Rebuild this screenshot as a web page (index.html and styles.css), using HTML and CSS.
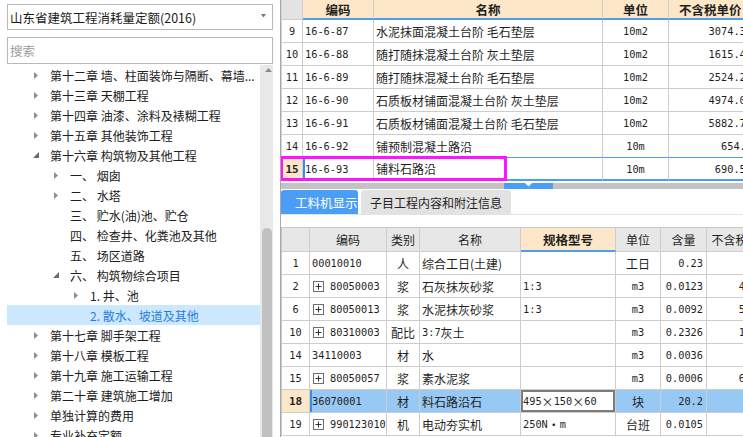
FILE: index.html
```html
<!DOCTYPE html>
<html lang="zh-CN">
<head>
<meta charset="utf-8">
<title>定额</title>
<link rel="stylesheet" href="styles.css">
</head>
<body>
<div class="app">
  <aside class="lp">
    <div class="sel"><span>山东省建筑工程消耗量定额(2016)</span><svg class="dd" width="5" height="4" viewBox="0 0 5 4"><path d="M0 0H5L2.5 3.5Z" fill="#7a7a7a"/></svg></div>
    <div class="search">搜索</div>
    <div class="treewrap">
      <ul class="tree">
        <li class="n l0"><span class="ar"><svg width="4" height="7" viewBox="0 0 4 7"><path d="M0 0L4 3.5L0 7Z" fill="#8e8e8e"/></svg></span><span class="t">第十二章 墙、柱面装饰与隔断、幕墙...</span></li>
        <li class="n l0"><span class="ar"><svg width="4" height="7" viewBox="0 0 4 7"><path d="M0 0L4 3.5L0 7Z" fill="#8e8e8e"/></svg></span><span class="t">第十三章 天棚工程</span></li>
        <li class="n l0"><span class="ar"><svg width="4" height="7" viewBox="0 0 4 7"><path d="M0 0L4 3.5L0 7Z" fill="#8e8e8e"/></svg></span><span class="t">第十四章 油漆、涂料及裱糊工程</span></li>
        <li class="n l0"><span class="ar"><svg width="4" height="7" viewBox="0 0 4 7"><path d="M0 0L4 3.5L0 7Z" fill="#8e8e8e"/></svg></span><span class="t">第十五章 其他装饰工程</span></li>
        <li class="n l0"><span class="ar ex"><svg width="6" height="6" viewBox="0 0 6 6"><path d="M6 0V6H0Z" fill="#6b6b6b"/></svg></span><span class="t">第十六章 构筑物及其他工程</span></li>
        <li class="n l1"><span class="ar"><svg width="4" height="7" viewBox="0 0 4 7"><path d="M0 0L4 3.5L0 7Z" fill="#8e8e8e"/></svg></span><span class="t">一、 烟囱</span></li>
        <li class="n l1"><span class="ar"><svg width="4" height="7" viewBox="0 0 4 7"><path d="M0 0L4 3.5L0 7Z" fill="#8e8e8e"/></svg></span><span class="t">二、 水塔</span></li>
        <li class="n l1"><span class="ar"></span><span class="t">三、 贮水(油)池、贮仓</span></li>
        <li class="n l1"><span class="ar"></span><span class="t">四、 检查井、化粪池及其他</span></li>
        <li class="n l1"><span class="ar"></span><span class="t">五、 场区道路</span></li>
        <li class="n l1"><span class="ar ex"><svg width="6" height="6" viewBox="0 0 6 6"><path d="M6 0V6H0Z" fill="#6b6b6b"/></svg></span><span class="t">六、 构筑物综合项目</span></li>
        <li class="n l2"><span class="ar"><svg width="4" height="7" viewBox="0 0 4 7"><path d="M0 0L4 3.5L0 7Z" fill="#8e8e8e"/></svg></span><span class="t">1. 井、池</span></li>
        <li class="n l2 on"><span class="ar"></span><span class="t">2. 散水、坡道及其他</span></li>
        <li class="n l0"><span class="ar"><svg width="4" height="7" viewBox="0 0 4 7"><path d="M0 0L4 3.5L0 7Z" fill="#8e8e8e"/></svg></span><span class="t">第十七章 脚手架工程</span></li>
        <li class="n l0"><span class="ar"><svg width="4" height="7" viewBox="0 0 4 7"><path d="M0 0L4 3.5L0 7Z" fill="#8e8e8e"/></svg></span><span class="t">第十八章 模板工程</span></li>
        <li class="n l0"><span class="ar"><svg width="4" height="7" viewBox="0 0 4 7"><path d="M0 0L4 3.5L0 7Z" fill="#8e8e8e"/></svg></span><span class="t">第十九章 施工运输工程</span></li>
        <li class="n l0"><span class="ar"><svg width="4" height="7" viewBox="0 0 4 7"><path d="M0 0L4 3.5L0 7Z" fill="#8e8e8e"/></svg></span><span class="t">第二十章 建筑施工增加</span></li>
        <li class="n l0"><span class="ar"><svg width="4" height="7" viewBox="0 0 4 7"><path d="M0 0L4 3.5L0 7Z" fill="#8e8e8e"/></svg></span><span class="t">单独计算的费用</span></li>
        <li class="n l0"><span class="ar"><svg width="4" height="7" viewBox="0 0 4 7"><path d="M0 0L4 3.5L0 7Z" fill="#8e8e8e"/></svg></span><span class="t">专业补充定额</span></li>
      </ul>
      <div class="vs">
        <svg class="up" width="7" height="4" viewBox="0 0 7 4"><path d="M0 4L3.5 0L7 4Z" fill="#8a8a8a"/></svg>
        <div class="thumb"></div>
      </div>
    </div>
  </aside>

  <main class="rp">
    <div class="g1">
      <div class="row hd">
        <div class="c a1 rnh"></div><div class="c a2">编码</div><div class="c a3">名称</div><div class="c a4">单位</div><div class="c a5">不含税单价</div>
      </div>
      <div class="row">
        <div class="c a1 m">9</div><div class="c a2 m">16-6-87</div><div class="c a3">水泥抹面混凝土台阶 毛石垫层</div><div class="c a4 m">10m2</div><div class="c a5 m">3074.37</div>
      </div>
      <div class="row">
        <div class="c a1 m">10</div><div class="c a2 m">16-6-88</div><div class="c a3">随打随抹混凝土台阶 灰土垫层</div><div class="c a4 m">10m2</div><div class="c a5 m">1615.43</div>
      </div>
      <div class="row">
        <div class="c a1 m">11</div><div class="c a2 m">16-6-89</div><div class="c a3">随打随抹混凝土台阶 毛石垫层</div><div class="c a4 m">10m2</div><div class="c a5 m">2524.25</div>
      </div>
      <div class="row">
        <div class="c a1 m">12</div><div class="c a2 m">16-6-90</div><div class="c a3">石质板材铺面混凝土台阶 灰土垫层</div><div class="c a4 m">10m2</div><div class="c a5 m">4974.03</div>
      </div>
      <div class="row">
        <div class="c a1 m">13</div><div class="c a2 m">16-6-91</div><div class="c a3">石质板材铺面混凝土台阶 毛石垫层</div><div class="c a4 m">10m2</div><div class="c a5 m">5882.71</div>
      </div>
      <div class="row t14">
        <div class="c a1 m">14</div><div class="c a2 m">16-6-92</div><div class="c a3">铺预制混凝土路沿</div><div class="c a4 m">10m</div><div class="c a5 m">654.9</div>
      </div>
      <div class="row t15">
        <div class="c a1 m">15</div><div class="c a2 m">16-6-93</div><div class="c a3">铺料石路沿</div><div class="c a4 m">10m</div><div class="c a5 m">690.51</div>
      </div>
      <div class="mark"></div>
    </div>

    <div class="hs"><div class="hthumb"><svg width="7" height="4" viewBox="0 0 7 4"><path d="M0 0H7L3.5 3.5Z" fill="#fff"/></svg></div></div>

    <div class="tabs">
      <div class="tab on">工料机显示</div>
      <div class="tab">子目工程内容和附注信息</div>
    </div>

    <div class="g2">
      <div class="row h2">
        <div class="c b1"></div><div class="c b2">编码</div><div class="c b3">类别</div><div class="c b4">名称</div><div class="c b5 spec">规格型号</div><div class="c b6">单位</div><div class="c b7 ctr">含量</div><div class="c b8 ctr">不含税单价</div>
      </div>
      <div class="row">
        <div class="c b1 m">1</div><div class="c b2"><span class="m">00010010</span></div><div class="c b3">人</div><div class="c b4">综合工日(土建)</div><div class="c b5"></div><div class="c b6">工日</div><div class="c b7 m">0.23</div><div class="c b8 m"></div>
      </div>
      <div class="row">
        <div class="c b1 m">2</div><div class="c b2"><svg class="pb" width="11" height="11" viewBox="0 0 11 11"><rect x=".5" y=".5" width="10" height="10" fill="#fff" stroke="#6e6e6e"/><path d="M2.5 5.5h6M5.5 2.5v6" stroke="#333"/></svg><span class="m">80050003</span></div><div class="c b3">浆</div><div class="c b4">石灰抹灰砂浆</div><div class="c b5 m">1:3</div><div class="c b6 m">m3</div><div class="c b7 m">0.0123</div><div class="c b8 m">412.36</div>
      </div>
      <div class="row">
        <div class="c b1 m">6</div><div class="c b2"><svg class="pb" width="11" height="11" viewBox="0 0 11 11"><rect x=".5" y=".5" width="10" height="10" fill="#fff" stroke="#6e6e6e"/><path d="M2.5 5.5h6M5.5 2.5v6" stroke="#333"/></svg><span class="m">80050013</span></div><div class="c b3">浆</div><div class="c b4">水泥抹灰砂浆</div><div class="c b5 m">1:3</div><div class="c b6 m">m3</div><div class="c b7 m">0.0092</div><div class="c b8 m">519.73</div>
      </div>
      <div class="row">
        <div class="c b1 m">10</div><div class="c b2"><svg class="pb" width="11" height="11" viewBox="0 0 11 11"><rect x=".5" y=".5" width="10" height="10" fill="#fff" stroke="#6e6e6e"/><path d="M2.5 5.5h6M5.5 2.5v6" stroke="#333"/></svg><span class="m">80310003</span></div><div class="c b3">配比</div><div class="c b4"><span class="m">3:7</span>灰土</div><div class="c b5"></div><div class="c b6 m">m3</div><div class="c b7 m">0.2326</div><div class="c b8 m">150.35</div>
      </div>
      <div class="row">
        <div class="c b1 m">14</div><div class="c b2"><span class="m">34110003</span></div><div class="c b3">材</div><div class="c b4">水</div><div class="c b5"></div><div class="c b6 m">m3</div><div class="c b7 m">0.0036</div><div class="c b8 m"></div>
      </div>
      <div class="row">
        <div class="c b1 m">15</div><div class="c b2"><svg class="pb" width="11" height="11" viewBox="0 0 11 11"><rect x=".5" y=".5" width="10" height="10" fill="#fff" stroke="#6e6e6e"/><path d="M2.5 5.5h6M5.5 2.5v6" stroke="#333"/></svg><span class="m">80050057</span></div><div class="c b3">浆</div><div class="c b4">素水泥浆</div><div class="c b5"></div><div class="c b6 m">m3</div><div class="c b7 m">0.0006</div><div class="c b8 m">648.38</div>
      </div>
      <div class="row r18">
        <div class="c b1 m">18</div><div class="c b2"><span class="m">36070001</span></div><div class="c b3">材</div><div class="c b4">料石路沿石</div><div class="c b5"><span class="m">495</span>×<span class="m">150</span>×<span class="m">60</span></div><div class="c b6">块</div><div class="c b7 m">20.2</div><div class="c b8 m"></div>
      </div>
      <div class="row">
        <div class="c b1 m">19</div><div class="c b2"><svg class="pb" width="11" height="11" viewBox="0 0 11 11"><rect x=".5" y=".5" width="10" height="10" fill="#fff" stroke="#6e6e6e"/><path d="M2.5 5.5h6M5.5 2.5v6" stroke="#333"/></svg><span class="m">990123010</span></div><div class="c b3">机</div><div class="c b4">电动夯实机</div><div class="c b5"><span class="m">250N</span>・<span class="m">m</span></div><div class="c b6">台班</div><div class="c b7 m">0.0105</div><div class="c b8 m"></div>
      </div>
    </div>
  </main>
</div>
</body>
</html>
```

FILE: styles.css
```css
* { box-sizing: border-box; margin: 0; padding: 0; }
html, body { width: 743px; height: 437px; overflow: hidden; background: #fff; }
body {
  font-family: "Noto Sans CJK SC", "Microsoft YaHei", sans-serif;
  font-size: 12px;
  color: #1f1f1f;
}
.app { display: flex; height: 437px; }

/* ---------- left panel ---------- */
.lp {
  width: 280px;
  flex: none;
  padding: 4px 7px 0;
  display: flex;
  flex-direction: column;
}
.sel {
  height: 26px;
  border: 1px solid #b9b9b9;
  display: flex;
  align-items: center;
  justify-content: space-between;
  padding: 0 6px 0 2px;
  font-size: 12.5px;
  color: #1a1a1a;
}
.dd { display: block; margin-top: -2px; }
.search {
  margin-top: 7px;
  height: 27px;
  border: 1px solid #b9b9b9;
  display: flex;
  align-items: center;
  padding-left: 2px;
  font-size: 12.5px;
  color: #9c9c9c;
}
.treewrap {
  margin-top: 1px;
  flex: 1;
  min-height: 0;
  display: flex;
  overflow: hidden;
}
.tree { list-style: none; flex: 1; min-width: 0; }
.n {
  height: 20px;
  display: flex;
  align-items: center;
  white-space: nowrap;
  color: #202020;
}
.l0 { padding-left: 27px; }
.l1 { padding-left: 47px; }
.l2 { padding-left: 67px; }
.ar { width: 16px; flex: none; display: flex; align-items: center; }
.ar svg { display: block; }
.ar.ex { margin-left: -1px; width: 17px; }
.t { overflow: hidden; }
.n.on { background: #cce8ff; color: #2a7be0; }
.vs {
  width: 13px;
  flex: none;
  background: #e8e8e8;
  display: flex;
  flex-direction: column;
}
.up { display: block; margin: 3px 0 0 5px; }
.thumb {
  margin: 156px 0 0 2px;
  width: 10px;
  flex: 1;
  background: #c1c1c1;
  border-radius: 5px 5px 0 0;
}

/* ---------- right panel ---------- */
.rp {
  flex: 1;
  min-width: 0;
  border-left: 1px solid #a9a9a9;
  overflow: hidden;
  display: flex;
  flex-direction: column;
}
.row { display: flex; }
.c {
  flex: none;
  height: 23px;
  border-right: 1px solid #cdcdcd;
  border-bottom: 1px solid #cdcdcd;
  display: flex;
  align-items: center;
  white-space: nowrap;
  overflow: hidden;
  padding: 0 2px;
}
.m { font-family: "DejaVu Sans Mono", "Liberation Mono", monospace; font-size: 10.3px; }

/* top grid */
.g1 {
  position: relative;
  border-left: 1px solid #d2d2d2;
  width: max-content;
}
.a1 { width: 21px; justify-content: center; padding: 0; }
.a2 { width: 71px; }
.a3 { width: 229px; }
.a4 { width: 66px; justify-content: center; }
.a5 { width: 91px; justify-content: flex-end; padding-right: 7px; }
.hd .c {
  height: 20px;
  background: #fde7c9;
  font-weight: bold;
  font-size: 12.5px;
  justify-content: center;
  border-bottom: 2px solid #4a9ff5;
}
.hd .a5 { justify-content: flex-start; padding-left: 10px; }
.hd .rnh { background: #e3e3e3; border-bottom: 1px solid #cdcdcd; }
.t14 .c:not(.a1) { border-bottom-color: #4a9ff5; }
.t15 .c:not(.a1) { border-bottom: 2px solid #4a9ff5; }
.t15 .a1 { background: #fde7c9; font-weight: bold; font-size: 11px; }
.t15 .a2 { box-shadow: inset 2px 0 #3a8bef; }
.mark {
  position: absolute;
  left: -2px;
  top: 156px;
  width: 227px;
  height: 25px;
  border: 3px solid #ff14ff;
}

.hs {
  margin-top: 2px;
  height: 6px;
  background: #c3c3c3;
  padding-left: 223px;
  display: flex;
}
.hthumb {
  width: 49px;
  background: #4a9ff5;
  display: flex;
  justify-content: center;
}
.hthumb svg { display: block; }

.tabs {
  margin-top: 1px;
  height: 25px;
  display: flex;
  border-bottom: 1px solid #e2e2e2;
}
.tab {
  width: 150px;
  margin-left: 3px;
  padding-left: 9px;
  background: #e2e2e2;
  display: flex;
  align-items: center;
  font-size: 12px;
  color: #222;
  border-radius: 3px 3px 0 0;
}
.tab.on {
  width: 77px;
  margin-left: 0;
  padding-left: 14px;
  background: #4b9ef5;
  color: #fff;
  font-size: 12.5px;
}

/* bottom grid */
.g2 {
  margin-top: 12px;
  border-top: 1px solid #c8c8c8;
  border-left: 1px solid #c8c8c8;
  width: max-content;
}
.b1 { width: 28px; justify-content: center; padding: 0; }
.b2 { width: 77px; }
.b3 { width: 33px; justify-content: center; padding: 0; }
.b4 { width: 101px; }
.b5 { width: 95px; }
.b6 { width: 45px; justify-content: center; }
.b7 { width: 46px; justify-content: flex-end; padding-right: 3px; }
.b8 { width: 70px; justify-content: flex-end; padding-right: 0; }
.h2 .c { height: 24px; background: #e7e7e7; justify-content: center; padding: 0; }
.h2 .spec {
  background: #fde7c9;
  font-weight: bold;
  font-size: 12.5px;
  border-bottom: 2px solid #4a9ff5;
}
.pb { display: block; flex: none; margin: 0 6px 0 1px; }
.r18 .c { background: #98c8f4; }
.r18 .b1 { background: #fde7c9; font-weight: bold; font-size: 11px; }
.r18 .b2 { box-shadow: inset 2px 0 #3a8bef; }
.r18 .b5 { background: #fff; box-shadow: inset 0 0 0 2px #7c7c7c; }
```
